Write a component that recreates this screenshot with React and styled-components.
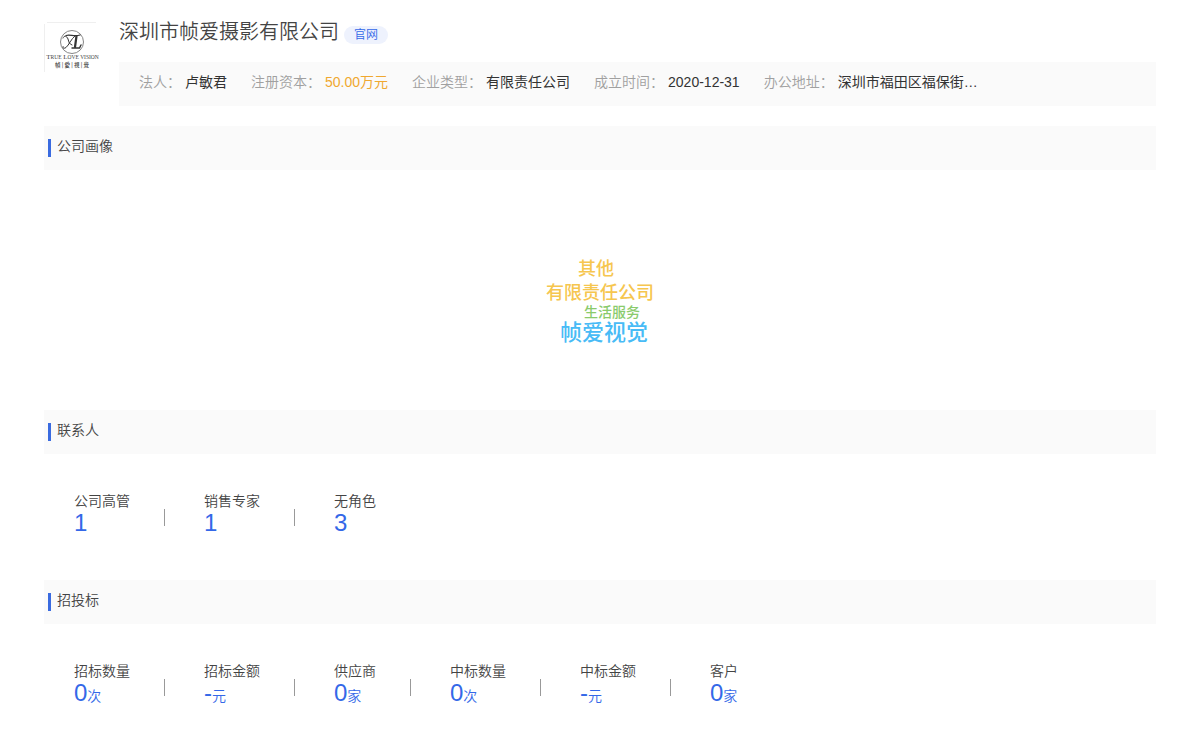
import React from "react";
import styled, { createGlobalStyle } from "styled-components";

const GlobalStyle = createGlobalStyle`
  * {
    box-sizing: border-box;
  }
  body {
    margin: 0;
    background: #fff;
    color: #444;
    font-family: "Liberation Sans", "Noto Sans CJK SC", sans-serif;
    font-size: 14px;
    font-weight: 350;
    line-height: 20px;
  }
`;

const Page = styled.main`
  padding: 20px 44px;
`;

const Header = styled.header`
  display: flex;
  margin-bottom: 20px;
`;

const Logo = styled.svg`
  flex: none;
  width: 55px;
  height: 55px;
  margin-right: 20px;
`;

const HeaderMain = styled.div`
  flex: 1;
  min-width: 0;
`;

const TitleRow = styled.div`
  display: flex;
  align-items: flex-start;
  height: 42px;
`;

const Title = styled.h1`
  margin: 0;
  font-size: 20px;
  font-weight: 350;
  line-height: 24px;
`;

const SiteLink = styled.a`
  margin: 6px 0 0 5px;
  padding: 0 10px;
  border-radius: 9px;
  background: #eef2fd;
  color: #3468e8;
  font-size: 12px;
  line-height: 18px;
  text-decoration: none;
`;

const InfoBar = styled.dl`
  display: flex;
  flex-wrap: wrap;
  column-gap: 24px;
  margin: 0;
  padding: 10px 20px 14px;
  background: #fafafa;
`;

const InfoItem = styled.div`
  display: flex;
`;

const InfoLabel = styled.dt`
  margin-right: 4px;
  color: #a0a0a0;
`;

const InfoValue = styled.dd`
  margin: 0;
  color: ${(props) => props.$color || "#333"};
  font-weight: 400;
`;

const SectionTitle = styled.h2`
  display: flex;
  margin: 0;
  padding: 10px 4px 13px;
  background: #fafafa;
  font-size: 14px;
  font-weight: 350;

  &::before {
    content: "";
    width: 3px;
    height: 18px;
    margin: 3px 6px 0 0;
    background: #3a6be0;
  }
`;

const Cloud = styled.div`
  position: relative;
  height: 240px;
`;

const CloudWord = styled.span`
  position: absolute;
  top: ${(props) => props.$y}px;
  left: calc(50% + ${(props) => props.$x}px);
  color: ${(props) => props.$color};
  font-size: ${(props) => props.$size}px;
  font-weight: 500;
  line-height: 24px;
  white-space: nowrap;
  transform: translate(-50%, -50%);
`;

const Stats = styled.ul`
  display: flex;
  flex-wrap: wrap;
  margin: 0;
  padding: 37px 30px 45px;
  list-style: none;
`;

const Stat = styled.li`
  display: flex;
  align-items: center;

  &:not(:last-child)::after {
    content: "";
    width: 1px;
    height: 17px;
    margin: 8px 39px 0 34px;
    background: #999;
  }
`;

const StatLabel = styled.div`
  line-height: 20px;
`;

const StatValue = styled.div`
  color: #3468e8;
  font-size: 24px;
  line-height: 24px;
`;

const Unit = styled.span`
  font-size: 14px;
  line-height: 20px;
`;

const info = [
  { label: "法人", value: "卢敏君" },
  { label: "注册资本", value: "50.00万元", color: "#f0a830" },
  { label: "企业类型", value: "有限责任公司" },
  { label: "成立时间", value: "2020-12-31" },
  { label: "办公地址", value: "深圳市福田区福保街…" },
];

const words = [
  { text: "其他", x: -4, y: 99, size: 18, color: "#f6c64f" },
  { text: "有限责任公司", x: 0, y: 123, size: 18, color: "#f6c64f" },
  { text: "生活服务", x: 12, y: 142, size: 14, color: "#8acb6c" },
  { text: "帧爱视觉", x: 4, y: 163, size: 22, color: "#48bbf6" },
];

const contacts = [
  { label: "公司高管", value: "1" },
  { label: "销售专家", value: "1" },
  { label: "无角色", value: "3" },
];

const bids = [
  { label: "招标数量", value: "0", unit: "次" },
  { label: "招标金额", value: "-", unit: "元" },
  { label: "供应商", value: "0", unit: "家" },
  { label: "中标数量", value: "0", unit: "次" },
  { label: "中标金额", value: "-", unit: "元" },
  { label: "客户", value: "0", unit: "家" },
];

function CompanyLogo() {
  return (
    <Logo viewBox="0 0 55 55" role="img" aria-label="True Love Vision">
      <path d="M0.5 52V4M3 2.5H52" fill="none" stroke="#efefef" />
      <circle cx="28" cy="22" r="11.5" fill="none" stroke="#777" strokeWidth="0.9" />
      <g fill="none" stroke="#333" strokeLinecap="round">
        <path d="M19 18c1-3 4-2 5 1s1 5 4 6" strokeWidth="1" />
        <path d="M22 15.5c4-1.5 8 1.5 14-.5" strokeWidth="1.2" />
        <path d="M31 16c-4 3-6 9-9 11.5c-2 1.5-4 .5-3-1" strokeWidth="1" />
        <path d="M32.500 16L31 27" strokeWidth="2.2" />
        <path d="M28 28h7.500l1.500-3" strokeWidth="1.4" />
      </g>
      <g fill="#444" textAnchor="middle">
        <text x="28.5" y="39" fontFamily="Liberation Serif, serif" fontSize="7">
          T<tspan fontSize="5.5">RUE</tspan> L<tspan fontSize="5.5">OVE VISION</tspan>
        </text>
        <text x="28" y="47" fontFamily="Noto Sans CJK TC, sans-serif" fontSize="5.5" fontWeight="500">
          幀 | 愛 | 視 | 覺
        </text>
      </g>
    </Logo>
  );
}

function StatList({ items }) {
  return (
    <Stats>
      {items.map((item) => (
        <Stat key={item.label}>
          <div>
            <StatLabel>{item.label}</StatLabel>
            <StatValue>
              {item.value}
              {item.unit && <Unit>{item.unit}</Unit>}
            </StatValue>
          </div>
        </Stat>
      ))}
    </Stats>
  );
}

function App() {
  return (
    <Page>
      <GlobalStyle />
      <Header>
        <CompanyLogo />
        <HeaderMain>
          <TitleRow>
            <Title>深圳市帧爱摄影有限公司</Title>
            <SiteLink href="#">官网</SiteLink>
          </TitleRow>
          <InfoBar>
            {info.map((item) => (
              <InfoItem key={item.label}>
                <InfoLabel>{item.label}：</InfoLabel>
                <InfoValue $color={item.color}>{item.value}</InfoValue>
              </InfoItem>
            ))}
          </InfoBar>
        </HeaderMain>
      </Header>
      <section>
        <SectionTitle>公司画像</SectionTitle>
        <Cloud>
          {words.map((word) => (
            <CloudWord
              key={word.text}
              $x={word.x}
              $y={word.y}
              $size={word.size}
              $color={word.color}
            >
              {word.text}
            </CloudWord>
          ))}
        </Cloud>
      </section>
      <section>
        <SectionTitle>联系人</SectionTitle>
        <StatList items={contacts} />
      </section>
      <section>
        <SectionTitle>招投标</SectionTitle>
        <StatList items={bids} />
      </section>
    </Page>
  );
}

export default App;
